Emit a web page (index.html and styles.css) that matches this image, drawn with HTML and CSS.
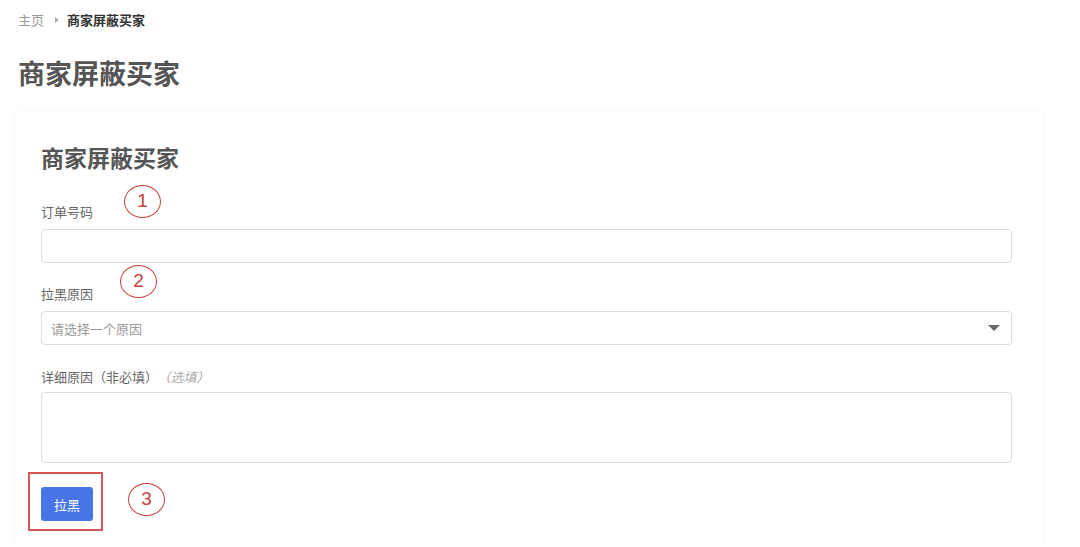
FILE: index.html
```html
<!DOCTYPE html>
<html lang="zh-CN">
<head>
<meta charset="utf-8">
<title>商家屏蔽买家</title>
<link rel="stylesheet" href="styles.css">
</head>
<body>
<div class="page">
  <nav class="crumbs">
    <span class="crumb-link">主页</span>
    <span class="crumb-sep"></span>
    <span class="crumb-current">商家屏蔽买家</span>
  </nav>
  <h1 class="page-title">商家屏蔽买家</h1>
  <section class="card">
    <h2 class="card-title">商家屏蔽买家</h2>
    <div class="field field-order">
      <label class="label">订单号码</label>
      <div class="control"></div>
      <span class="mark mark-1">1</span>
    </div>
    <div class="field field-reason">
      <label class="label">拉黑原因</label>
      <div class="control select">
        <span class="placeholder">请选择一个原因</span>
        <span class="caret"></span>
      </div>
      <span class="mark mark-2">2</span>
    </div>
    <div class="field field-detail">
      <label class="label label-detail">详细原因（非必填）<em class="hint">（选填）</em></label>
      <div class="control textarea"></div>
    </div>
    <div class="actions">
      <button class="btn">拉黑</button>
      <span class="highlight"></span>
      <span class="mark mark-3">3</span>
    </div>
  </section>
</div>
</body>
</html>
```

FILE: styles.css
```css
* { box-sizing: border-box; }
html, body {
  margin: 0;
  padding: 0;
  background: #fff;
  font-family: "Noto Sans CJK SC", "Liberation Sans", sans-serif;
}
.page {
  padding: 11px 0 0 15px;
  width: 1080px;
}
.crumbs {
  display: flex;
  align-items: center;
  padding-left: 3px;
  font-size: 13px;
  line-height: 17px;
  height: 17px;
}
.crumb-link { color: #9a9a9a; }
.crumb-sep {
  width: 0;
  height: 0;
  border-top: 3px solid transparent;
  border-bottom: 3px solid transparent;
  border-left: 4px solid #aaa;
  margin: 0 8px 0 11px;
}
.crumb-current { color: #333; font-weight: 700; }
.page-title {
  margin: 29px 0 0;
  padding-left: 3px;
  font-size: 27px;
  line-height: 32px;
  font-weight: 700;
  color: #555;
}
.card {
  margin-top: 22px;
  width: 1028px;
  background: #fff;
  box-shadow: 0 0 4px rgba(0, 0, 0, 0.045);
  padding: 31px 31px 24px 26px;
}
.card-title {
  margin: 0;
  font-size: 23px;
  line-height: 30px;
  font-weight: 700;
  color: #555;
}
.field { position: relative; }
.field-order { margin-top: 31px; }
.field-reason { margin-top: 22px; }
.field-detail { margin-top: 23px; }
.label {
  display: block;
  font-size: 13px;
  line-height: 17px;
  color: #666;
  margin-bottom: 9px;
}
.label-detail { margin-bottom: 7px; }
.hint { color: #aaa; font-style: italic; margin-left: 6px; }
.control {
  height: 34px;
  border: 1px solid #ddd;
  border-radius: 4px;
  background: #fff;
}
.select {
  display: flex;
  align-items: center;
  justify-content: space-between;
  padding: 0 11px 0 9px;
}
.placeholder { font-size: 13px; color: #999; }
.caret {
  width: 0;
  height: 0;
  border-left: 6px solid transparent;
  border-right: 6px solid transparent;
  border-top: 6px solid #666;
}
.textarea { height: 71px; }
.actions {
  position: relative;
  margin-top: 24px;
  height: 34px;
}
.btn {
  width: 52px;
  height: 34px;
  border: 0;
  border-radius: 3px;
  background: #4775e6;
  color: #fff;
  font-family: inherit;
  font-size: 13px;
  padding: 0;
}
.highlight {
  position: absolute;
  left: -13px;
  top: -15px;
  width: 75px;
  height: 59px;
  border: 2px solid #d65757;
}
.mark {
  position: absolute;
  width: 37px;
  height: 33px;
  border: 1.5px solid #c8403a;
  border-radius: 50%;
  color: #c8403a;
  font-family: "Liberation Sans", sans-serif;
  font-size: 19px;
  line-height: 30px;
  text-align: center;
}
.mark-1 { left: 83px; top: -18px; }
.mark-2 { left: 79px; top: -20px; }
.mark-3 { left: 87px; top: -4px; }
```
